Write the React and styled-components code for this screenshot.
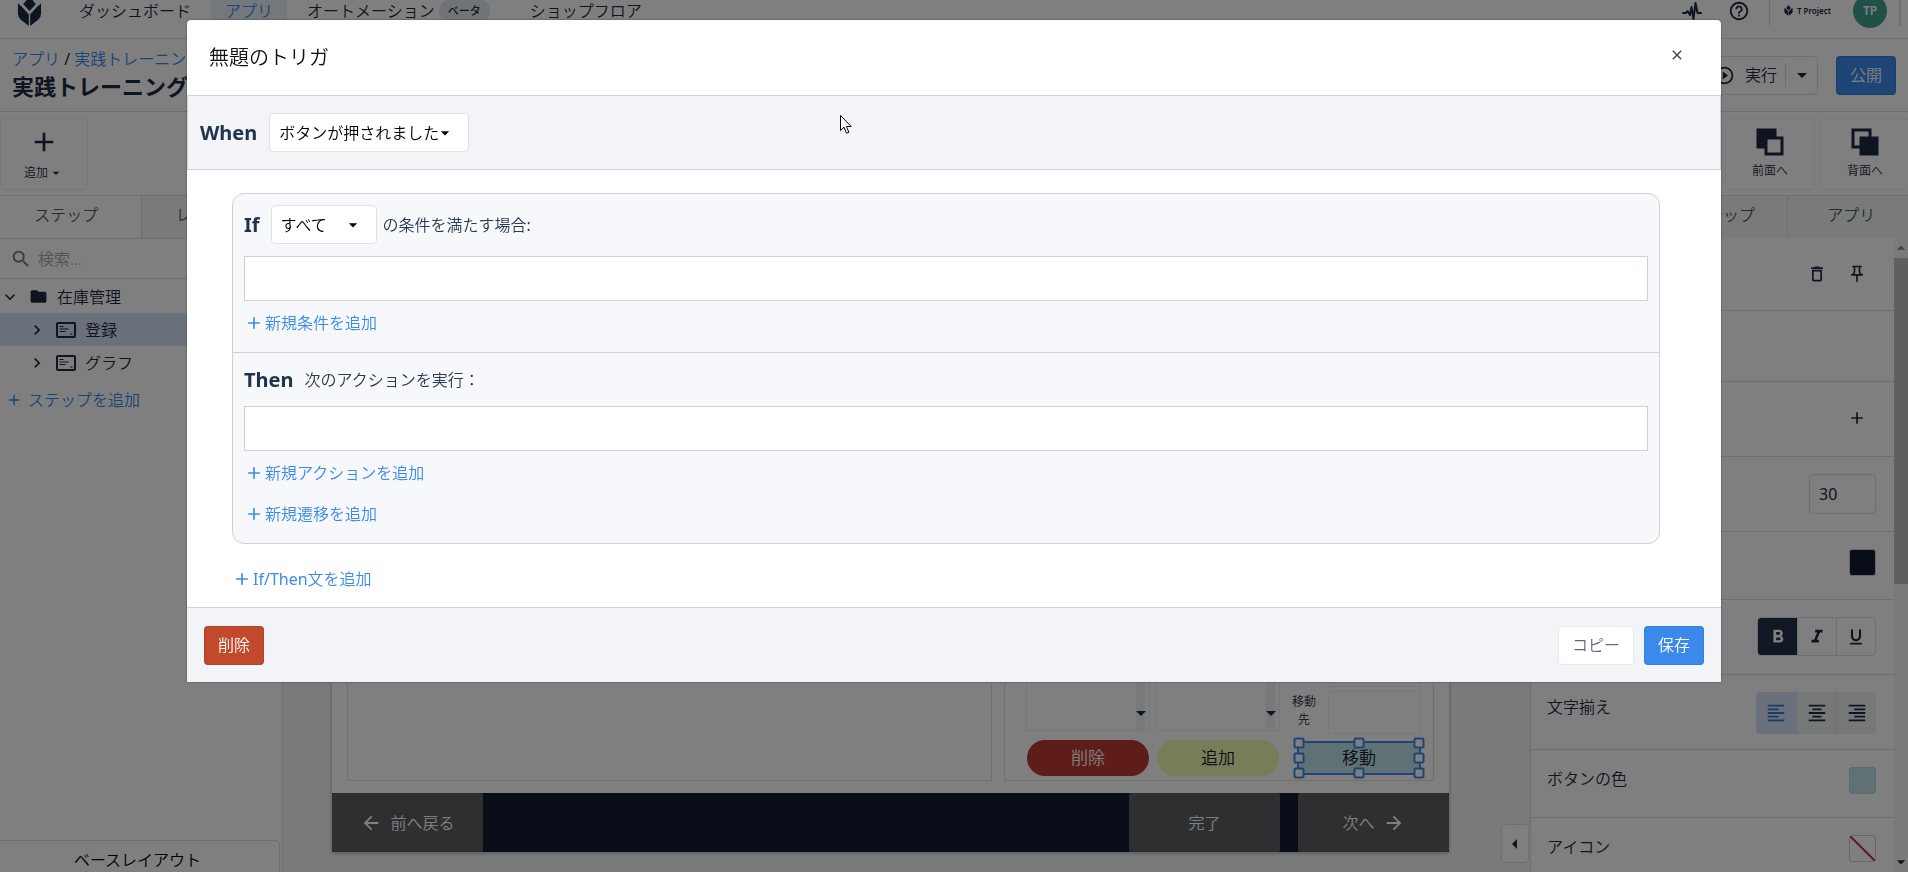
import React from 'react'
import styled, { createGlobalStyle, css } from 'styled-components'
import {
  MdAdd,
  MdArrowBack,
  MdArrowDropDown,
  MdArrowDropUp,
  MdArrowForward,
  MdArrowLeft,
  MdChevronRight,
  MdClose,
  MdDeleteOutline,
  MdExpandMore,
  MdFolder,
  MdFormatAlignCenter,
  MdFormatAlignLeft,
  MdFormatAlignRight,
  MdFormatBold,
  MdFormatItalic,
  MdFormatUnderlined,
  MdHelpOutline,
  MdOutlinePushPin,
  MdPlayCircleOutline,
  MdSearch,
} from 'react-icons/md'

const colors = {
  ink: '#1c2b42',
  navy: '#101a2f',
  blue: '#3b8aeb',
  red: '#c2492c',
  line: '#dcdee0',
  modalLine: '#cdd1d9',
  canvas: '#f3f7f5',
  selected: '#d6e2f8',
}

const GlobalStyle = createGlobalStyle`
  * {
    box-sizing: border-box;
  }

  body {
    color: ${colors.ink};
    font-family: "Noto Sans", "Noto Sans CJK JP", sans-serif;
    font-size: 16px;
    font-weight: 350;
    line-height: 24px;
    margin: 0;
    overflow: hidden;
  }

  button, input, select {
    color: inherit;
    font: inherit;
    margin: 0;
  }

  button {
    align-items: center;
    background: none;
    border: 0;
    cursor: pointer;
    display: flex;
    justify-content: center;
    padding: 0;
    white-space: nowrap;
  }

  a {
    color: ${colors.blue};
    text-decoration: none;
  }

  svg {
    display: block;
    flex: none;
  }
`

const Latin = styled.span`
  font-weight: 400;
`

const Shell = styled.div`
  background: #fff;
  display: flex;
  flex-direction: column;
  height: 100vh;
  overflow: hidden;
`

/* top navigation */

const TopNav = styled.header`
  align-items: center;
  border-bottom: 1px solid ${colors.line};
  display: flex;
  flex: none;
  height: 56px;
  justify-content: space-between;
  margin-top: -17px;
  padding: 0 7px 0 17px;
`

const NavGroup = styled.nav`
  align-items: center;
  align-self: stretch;
  display: flex;

  > svg {
    margin-right: 17px;
  }
`

const NavLink = styled.a`
  align-items: center;
  align-self: stretch;
  background: ${({ $active }) => $active ? '#eaf0f5' : 'none'};
  color: ${({ $active }) => $active ? colors.blue : colors.ink};
  display: flex;
  gap: 4px;
  padding: 0 ${({ $active }) => $active ? 14 : 20}px;
`

const Beta = styled.span`
  background: #e3e8ee;
  border-radius: 14px;
  font-size: 11px;
  font-weight: 500;
  padding: 0 9px;
`

const Account = styled.div`
  align-items: center;
  display: flex;
`

const HelpIcon = styled(MdHelpOutline)`
  margin: 0 19px 0 26px;
`

const Rule = styled.span`
  background: ${colors.line};
  height: 30px;
  width: ${({ $thick }) => $thick ? 2 : 1}px;
`

const Workspace = styled.span`
  align-items: center;
  display: flex;
  font-size: 8px;
  font-weight: 600;
  gap: 4px;
  margin: 0 22px 0 14px;
`

const Avatar = styled.span`
  background: #43a28c;
  border-radius: 50%;
  color: #fff;
  font-size: 12px;
  font-weight: 600;
  height: 34px;
  line-height: 34px;
  margin-right: 12px;
  text-align: center;
  width: 34px;
`

/* title row and toolbar */

const TitleBar = styled.div`
  align-items: center;
  border-bottom: 1px solid ${colors.line};
  display: flex;
  flex: none;
  height: 73px;
  justify-content: space-between;
  padding: 0 12px;
`

const Heading = styled.div`
  padding-bottom: 3px;
`

const AppTitle = styled.h1`
  font-size: 22px;
  font-weight: 700;
  line-height: 30px;
  margin: 0;
`

const Actions = styled.div`
  display: flex;
  gap: 18px;
`

const RunButton = styled.button`
  border: 1px solid ${colors.line};
  border-radius: 4px;
  height: 39px;
  padding: 0 3px 0 16px;

  span {
    border-right: 1px solid ${colors.line};
    margin: 0 4px 0 10px;
    padding-right: 8px;
  }
`

const Button = styled.button`
  background: ${({ $color }) => $color || '#fff'};
  border: 1px solid ${({ $color }) => $color ? 'rgba(0, 0, 0, .08)' : '#e8eaed'};
  border-radius: 4px;
  color: ${({ $color }) => $color ? '#fff' : '#5d6b7a'};
  height: 39px;
  padding: 0 13px;
`

const Toolbar = styled.div`
  border-bottom: 1px solid ${colors.line};
  display: flex;
  flex: none;
  gap: 5px;
  height: 84px;
  margin-right: -2px;
  padding: 6px 0 5px;
`

const Tool = styled.button`
  border: 1px solid #eceeef;
  border-radius: 4px;
  flex: none;
  flex-direction: column;
  font-size: 12px;
  gap: 3px;
  margin-left: ${({ $push }) => $push ? 'auto' : 0};
  padding-top: 3px;
  width: ${({ $wide }) => $wide ? 90 : 88}px;

  span {
    display: flex;
    align-items: center;
  }
`

/* body columns */

const Columns = styled.div`
  display: flex;
  flex: 1;
  min-height: 0;
`

const Sidebar = styled.aside`
  border-right: 1px solid ${colors.line};
  display: flex;
  flex: none;
  flex-direction: column;
  width: 283px;
`

const PropertySidebar = styled.aside`
  border-left: 1px solid ${colors.line};
  display: flex;
  flex: none;
  flex-direction: column;
  overflow: hidden;
  width: 378px;
`

const Tabs = styled.div`
  display: flex;
  flex: none;
  height: 42px;
  margin-right: ${({ $bleed }) => $bleed ? -7 : 0}px;
`

const Tab = styled.button`
  background: ${({ $active }) => $active ? '#fff' : colors.canvas};
  border-left: 1px solid ${colors.line};
  color: #4c5968;
  flex: 1;
  padding: 0 8px 4px 0;

  &:first-child {
    border-left: 0;
  }

  ${PropertySidebar} & {
    padding-right: 0;
  }
`

const Search = styled.label`
  align-items: center;
  border-bottom: 1px solid ${colors.line};
  border-top: 1px solid ${colors.line};
  color: #6c7885;
  display: flex;
  gap: 6px;
  height: 41px;
  padding: 0 10px;

  input {
    border: 0;
    outline: 0;
    padding: 0;
    width: 200px;
  }

  input::placeholder {
    color: #a3a9af;
  }
`

const Tree = styled.ul`
  list-style: none;
  margin: 1px 0 5px;
  padding: 0;
`

const TreeRow = styled.li`
  align-items: center;
  background: ${({ $selected }) => $selected ? colors.selected : 'none'};
  display: flex;
  gap: 9px;
  height: 33px;
  padding-left: ${({ $nested }) => $nested ? 27 : 0}px;
`

const AddStep = styled.button`
  align-self: flex-start;
  color: ${colors.blue};
  gap: 5px;
  height: 32px;
  padding-left: 5px;
`

const BaseLayout = styled.button`
  border: 1px solid ${colors.line};
  border-left: 0;
  border-radius: 0 4px 0 0;
  color: #000;
  height: 40px;
  margin: auto 2px -8px 0;
  padding-right: 4px;
`

/* canvas */

const Canvas = styled.main`
  background: ${colors.canvas};
  display: flex;
  flex: 1;
  padding: 24px 81px 20px 49px;
  position: relative;
`

const Collapse = styled.button`
  background: #fff;
  border: 1px solid ${colors.line};
  border-radius: 4px;
  bottom: 9px;
  height: 39px;
  position: absolute;
  right: 1px;
  width: 28px;
`

const StepPage = styled.div`
  background: #fff;
  box-shadow: 0 1px 4px rgba(0, 0, 0, .3);
  display: flex;
  flex: 1;
  flex-direction: column;
`

const StepBody = styled.div`
  display: grid;
  flex: 1;
  gap: 12px;
  grid-template-columns: 3fr 2fr;
  padding: 15px 15px 12px;
`

const Pane = styled.div`
  border: 1px solid ${colors.line};
`

const FormPane = styled(Pane)`
  display: grid;
  gap: 6px;
  grid-template-columns: 124px 124px 1fr;
  grid-template-rows: 1fr 36px;
  padding: 20px 12px 4px 21px;
`

const List = styled.div`
  border: 1px solid #eceeef;
  border-radius: 2px;
  display: flex;
  justify-content: flex-end;
  margin-bottom: 3px;
  padding-right: 4px;
`

const ListScroll = styled.div`
  align-items: flex-end;
  background: #f1f3f4;
  display: flex;
  justify-content: center;
  padding-bottom: 14px;
  width: 9px;
`

const Fields = styled.div`
  display: flex;
  flex-direction: column;
  gap: 4px;
  justify-content: flex-end;
`

const FieldRow = styled.label`
  display: flex;
  font-size: 12px;
  gap: 12px;
  justify-content: flex-end;
  line-height: 18px;
  text-align: center;

  span {
    padding-top: 2px;
    width: 24px;
  }

  input {
    border: 1px solid #eceeef;
    border-radius: 2px;
    height: 43px;
    width: 93px;
  }
`

const Pill = styled.button`
  background: ${({ $color }) => $color};
  border-radius: 18px;
  color: ${({ $light }) => $light ? '#fff' : '#10182a'};
  font-size: 17px;
  margin: 0 1px;
`

const Selection = styled.div`
  border: 2px solid ${colors.blue};
  display: grid;
  margin: 1px 0 1px 11px;
  position: relative;

  button {
    border-radius: 8px;
    margin: 0;
  }
`

const Handle = styled.i`
  background: #fff;
  border: 2px solid ${colors.blue};
  border-radius: 2px;
  height: 11px;
  left: ${({ $x }) => $x}%;
  position: absolute;
  top: ${({ $y }) => $y}%;
  transform: translate(-50%, -50%);
  width: 11px;
`

const StepNav = styled.div`
  background: ${colors.navy};
  display: flex;
  gap: 18px;
  height: 59px;
`

const StepButton = styled.button`
  background: #5c5e62;
  border-radius: 2px;
  color: #fff;
  gap: 8px;
  margin-right: ${({ $spread }) => $spread ? 'auto' : 0};
  width: 151px;
`

/* property panel */

const PanelScroll = styled.div`
  display: flex;
  flex: 1;
  min-height: 0;
`

const Properties = styled.div`
  flex: 1;
  overflow: hidden;
`

const Property = styled.div`
  align-items: flex-start;
  border-bottom: 1px solid ${colors.line};
  display: flex;
  height: ${({ $height }) => $height || 68}px;
  justify-content: space-between;
  padding: 17px 18px 0 16px;
`

const PropertyLabel = styled.span`
  line-height: ${({ $tall }) => $tall ? 30 : 24}px;
`

const PropertyIcons = styled.div`
  display: flex;
  gap: 20px;
  margin-left: auto;
  padding: 9px 9px 0 0;
`

const SizeInput = styled.input`
  border: 1px solid ${colors.line};
  border-radius: 4px;
  font-weight: 400;
  height: 40px;
  margin-left: auto;
  padding: 0 9px;
  width: 67px;
`

const Swatch = styled.button`
  background: ${({ $color }) => $color};
  border: 1px solid #c9cdd0;
  border-radius: 3px;
  height: 27px;
  margin-left: auto;
  width: 27px;
`

const Segments = styled.div`
  background: ${({ $filled }) => $filled ? '#edf0f0' : '#fff'};
  border: ${({ $filled }) => $filled ? 0 : 1}px solid ${colors.line};
  border-radius: 4px;
  display: flex;
  height: ${({ $filled }) => $filled ? 42 : 39}px;
  margin-left: auto;
  overflow: hidden;
`

const Segment = styled.button`
  width: ${({ $wide }) => $wide ? 40 : 39}px;

  & + & {
    border-left: 1px solid ${colors.line};
  }

  ${({ $on }) => $on === 'dark' && css`
    background: #222f49;
    color: #fff;
  `}

  ${({ $on }) => $on === 'light' && css`
    background: ${colors.selected};
    color: #3579c4;
  `}
`

const ScrollTrack = styled.div`
  align-items: center;
  background: #f5f5f5;
  display: flex;
  flex-direction: column;
  width: 14px;
`

const ScrollThumb = styled.div`
  background: #bfbfbf;
  height: 326px;
  margin-bottom: auto;
  width: 14px;
`

/* trigger dialog */

const Backdrop = styled.div`
  background: rgba(0, 0, 0, .5);
  inset: 0;
  padding: 20px 187px;
  position: fixed;
`

const Dialog = styled.div`
  background: #fff;
  border-radius: 4px 4px 0 0;
  box-shadow: 0 0 2px rgba(0, 0, 0, .5);
  overflow: hidden;
`

const DialogHeader = styled.div`
  align-items: center;
  color: #111;
  display: flex;
  height: 75px;
  justify-content: space-between;
  padding: 0 33px 0 22px;
`

const DialogTitle = styled.h2`
  font-size: 20px;
  font-weight: 350;
  margin: 0;
`

const CloseButton = styled.button`
  color: #34435a;
  height: 22px;
  margin-bottom: 5px;
  width: 22px;
`

const WhenBar = styled.div`
  align-items: center;
  background: #f3f4f7;
  border: 1px solid ${colors.modalLine};
  display: flex;
  gap: 12px;
  height: 75px;
  padding: 0 12px;
`

const Keyword = styled.label`
  color: #21344e;
  font-size: 20px;
  font-weight: 700;
`

const SelectWrap = styled.div`
  position: relative;

  select {
    appearance: none;
    background: #fff;
    border: 1px solid #dfe2e7;
    border-radius: 4px;
    color: #000;
    height: 39px;
    padding: 0 9px;
    width: ${({ $wide }) => $wide ? 200 : 106}px;
  }

  svg {
    color: #000;
    pointer-events: none;
    position: absolute;
    right: 14px;
    top: 10px;
  }
`

const DialogBody = styled.div`
  padding: 23px 61px 8px 45px;
`

const Clause = styled.section`
  background: #f7f8fb;
  border: 1px solid ${colors.modalLine};
  border-radius: 12px;
  margin-bottom: 14px;
`

const Block = styled.div`
  padding: 11px 11px 9px;

  & + & {
    border-top: 1px solid ${colors.modalLine};
  }
`

const BlockHead = styled.div`
  align-items: center;
  color: #2b3a4f;
  display: flex;
  gap: 6px;
  min-height: 32px;

  ${Keyword} {
    margin-right: 5px;
  }
`

const Statements = styled.div`
  background: #fff;
  border: 1px solid ${colors.modalLine};
  height: 45px;
  margin: ${({ $then }) => $then ? 10 : 12}px 0 1px;
`

const AddLink = styled.button`
  color: ${colors.blue};
  height: 41px;

  svg {
    margin-right: 1px;
  }
`

const DialogFooter = styled.div`
  align-items: center;
  background: #f3f4f7;
  border-top: 1px solid ${colors.modalLine};
  display: flex;
  gap: 10px;
  height: 75px;
  padding: 0 17px;

  button:first-child {
    margin-right: auto;
  }
`

const Pointer = styled.svg`
  left: 839px;
  position: fixed;
  top: 114px;
`

const TulipLogo = ({ size }) => (
  <svg width={ size } height={ size * 1.2 } viewBox="0 0 26 31" fill={ colors.ink }>
    <path d="M13 0l6.500 8.500-6.500 7-6.500-7z" />
    <path d="M1 7.500l4 3.500 7.300 8V31L4 24.500Q1 22 1 18z" />
    <path d="M25 7.500l-4 3.500-7.300 8V31l8.300-6.500Q25 22 25 18z" />
  </svg>
)

const PulseIcon = () => (
  <svg width="20" height="20" viewBox="0 0 20 20" fill="none" stroke={ colors.ink } strokeWidth="2" strokeLinejoin="round" strokeLinecap="round">
    <path d="M1 12h3l1.500-2 2.500 4 1.500-8 2 12 2-16 2 10h3.500" />
  </svg>
)

const LayerIcon = ({ front }) => (
  <svg width="28" height="28" viewBox="0 0 28 28" stroke={ colors.ink } strokeWidth="3">
    <rect x="2" y="2" width="17" height="17" fill={ front ? colors.ink : '#fff' } />
    <rect x="10" y="10" width="16" height="16" fill={ front ? '#fff' : colors.ink } />
  </svg>
)

const StepIcon = () => (
  <svg width="20" height="16" viewBox="0 0 20 16" fill="none" stroke={ colors.ink }>
    <rect x="1" y="1" width="18" height="14" rx="1" strokeWidth="2" />
    <path d="M3.500 4.500h4M3.500 7h9M3.500 9.500h6M14 12h2.500" strokeWidth="1.200" />
  </svg>
)

const Caret = () => (
  <svg width="10" height="5" viewBox="0 0 10 5" fill="currentColor">
    <path d="M0 0h10L5 5z" />
  </svg>
)

const AddButton = ({ children }) => (
  <AddLink type="button">
    <MdAdd size="20" />
    { children }
  </AddLink>
)

const handles = [[0, 0], [50, 0], [100, 0], [0, 50], [100, 50], [0, 100], [50, 100], [100, 100]]

const Header = () => (
  <TopNav>
    <NavGroup>
      <TulipLogo size={ 25 } />
      <NavLink href="#">ダッシュボード</NavLink>
      <NavLink href="#" $active>アプリ</NavLink>
      <NavLink href="#">オートメーション <Beta>ベータ</Beta></NavLink>
      <NavLink href="#">ショップフロア</NavLink>
    </NavGroup>
    <Account>
      <PulseIcon />
      <HelpIcon size="22" />
      <Rule />
      <Workspace><TulipLogo size={ 9 } />T Project</Workspace>
      <Avatar>TP</Avatar>
      <Rule $thick />
    </Account>
  </TopNav>
)

const StepsSidebar = () => (
  <Sidebar>
    <Tabs>
      <Tab type="button" $active>ステップ</Tab>
      <Tab type="button">レコード</Tab>
    </Tabs>
    <Search>
      <MdSearch size="22" />
      <input type="text" placeholder="検索..." aria-label="検索" />
    </Search>
    <Tree>
      <TreeRow>
        <MdExpandMore size="20" />
        <MdFolder size="19" />
        在庫管理
      </TreeRow>
      <TreeRow $nested $selected>
        <MdChevronRight size="20" />
        <StepIcon />
        登録
      </TreeRow>
      <TreeRow $nested>
        <MdChevronRight size="20" />
        <StepIcon />
        グラフ
      </TreeRow>
    </Tree>
    <AddStep type="button"><MdAdd size="18" />ステップを追加</AddStep>
    <BaseLayout type="button">ベースレイアウト</BaseLayout>
  </Sidebar>
)

const StepCanvas = () => (
  <Canvas>
    <StepPage>
      <StepBody>
        <Pane />
        <FormPane>
          <List><ListScroll><Caret /></ListScroll></List>
          <List><ListScroll><Caret /></ListScroll></List>
          <Fields>
            <FieldRow><input type="text" aria-label="数量" /></FieldRow>
            <FieldRow><span>移動先</span><input type="text" /></FieldRow>
          </Fields>
          <Pill type="button" $color="#bd3a32" $light>削除</Pill>
          <Pill type="button" $color="#f1f8b2">追加</Pill>
          <Selection>
            <Pill type="button" $color="#bfe3ea">移動</Pill>
            { handles.map(([x, y]) => <Handle key={ `${x}-${y}` } $x={ x } $y={ y } />) }
          </Selection>
        </FormPane>
      </StepBody>
      <StepNav>
        <StepButton type="button" $spread><MdArrowBack size="22" />前へ戻る</StepButton>
        <StepButton type="button">完了</StepButton>
        <StepButton type="button">次へ<MdArrowForward size="22" /></StepButton>
      </StepNav>
    </StepPage>
    <Collapse type="button" aria-label="パネルを開閉"><MdArrowLeft size="24" /></Collapse>
  </Canvas>
)

const PropertyPanel = () => (
  <PropertySidebar>
    <Tabs $bleed>
      <Tab type="button" $active>ウィジェット</Tab>
      <Tab type="button">ステップ</Tab>
      <Tab type="button">アプリ</Tab>
    </Tabs>
    <PanelScroll>
      <Properties>
        <Property $height={ 73 }>
          <PropertyIcons>
            <MdDeleteOutline size="20" />
            <MdOutlinePushPin size="20" />
          </PropertyIcons>
        </Property>
        <Property $height={ 71 } />
        <Property $height={ 75 }>
          <PropertyIcons><MdAdd size="20" /></PropertyIcons>
        </Property>
        <Property $height={ 75 }>
          <SizeInput type="text" defaultValue="30" aria-label="文字サイズ" />
        </Property>
        <Property>
          <Swatch type="button" $color={ colors.navy } aria-label="文字の色" />
        </Property>
        <Property $height={ 75 }>
          <Segments>
            <Segment type="button" $on="dark" aria-label="太字"><MdFormatBold size="22" /></Segment>
            <Segment type="button" aria-label="斜体"><MdFormatItalic size="22" /></Segment>
            <Segment type="button" aria-label="下線"><MdFormatUnderlined size="20" /></Segment>
          </Segments>
        </Property>
        <Property $height={ 75 }>
          <PropertyLabel $tall>文字揃え</PropertyLabel>
          <Segments $filled>
            <Segment type="button" $wide $on="light" aria-label="左揃え"><MdFormatAlignLeft size="22" /></Segment>
            <Segment type="button" $wide aria-label="中央揃え"><MdFormatAlignCenter size="22" /></Segment>
            <Segment type="button" $wide aria-label="右揃え"><MdFormatAlignRight size="22" /></Segment>
          </Segments>
        </Property>
        <Property>
          <PropertyLabel>ボタンの色</PropertyLabel>
          <Swatch type="button" $color="#bfe3ea" aria-label="ボタンの色" />
        </Property>
        <Property>
          <PropertyLabel>アイコン</PropertyLabel>
          <Swatch type="button" $color="#fff" aria-label="アイコン">
            <svg width="25" height="25" viewBox="0 0 25 25" stroke="#c8342e" strokeWidth="2">
              <path d="M0 0l25 25" />
            </svg>
          </Swatch>
        </Property>
      </Properties>
      <ScrollTrack>
        <MdArrowDropUp size="20" color="#8a8a8a" />
        <ScrollThumb />
        <MdArrowDropDown size="20" />
      </ScrollTrack>
    </PanelScroll>
  </PropertySidebar>
)

const TriggerDialog = () => (
  <Backdrop>
    <Dialog role="dialog" aria-labelledby="trigger-title">
      <DialogHeader>
        <DialogTitle id="trigger-title">無題のトリガ</DialogTitle>
        <CloseButton type="button" aria-label="閉じる"><MdClose size="16" /></CloseButton>
      </DialogHeader>
      <WhenBar>
        <Keyword htmlFor="event">When</Keyword>
        <SelectWrap $wide>
          <select id="event"><option>ボタンが押されました</option></select>
          <MdArrowDropDown size="20" />
        </SelectWrap>
      </WhenBar>
      <DialogBody>
        <Clause>
          <Block>
            <BlockHead>
              <Keyword htmlFor="match">If</Keyword>
              <SelectWrap>
                <select id="match"><option>すべて</option></select>
                <MdArrowDropDown size="20" />
              </SelectWrap>
              <span>の条件を満たす場合<Latin>:</Latin></span>
            </BlockHead>
            <Statements />
            <AddButton>新規条件を追加</AddButton>
          </Block>
          <Block>
            <BlockHead>
              <Keyword as="strong">Then</Keyword>
              <span>次のアクションを実行：</span>
            </BlockHead>
            <Statements $then />
            <AddButton>新規アクションを追加</AddButton>
            <AddButton>新規遷移を追加</AddButton>
          </Block>
        </Clause>
        <AddButton><Latin>If/Then</Latin>文を追加</AddButton>
      </DialogBody>
      <DialogFooter>
        <Button type="button" $color={ colors.red }>削除</Button>
        <Button type="button">コピー</Button>
        <Button type="button" $color={ colors.blue }>保存</Button>
      </DialogFooter>
    </Dialog>
    <Pointer width="14" height="21" viewBox="0 0 14 21" fill="#fff" stroke="#000">
      <path d="M1.500 1.500v15l3.500-3.300 2.500 6 2.400-1-2.500-5.700h4.800z" />
    </Pointer>
  </Backdrop>
)

const App = () => (
  <>
    <GlobalStyle />
    <Shell>
      <Header />
      <TitleBar>
        <Heading>
          <div><a href="#">アプリ</a> <Latin>/</Latin> <a href="#">実践トレーニング</a></div>
          <AppTitle>実践トレーニング</AppTitle>
        </Heading>
        <Actions>
          <RunButton type="button">
            <MdPlayCircleOutline size="21" />
            <span>実行</span>
            <MdArrowDropDown size="24" />
          </RunButton>
          <Button type="button" $color={ colors.blue }>公開</Button>
        </Actions>
      </TitleBar>
      <Toolbar>
        <Tool type="button">
          <MdAdd size="32" />
          <span>追加<MdArrowDropDown size="16" /></span>
        </Tool>
        <Tool type="button" $push $wide><LayerIcon front />前面へ</Tool>
        <Tool type="button" $wide><LayerIcon />背面へ</Tool>
      </Toolbar>
      <Columns>
        <StepsSidebar />
        <StepCanvas />
        <PropertyPanel />
      </Columns>
    </Shell>
    <TriggerDialog />
  </>
)

export default App
